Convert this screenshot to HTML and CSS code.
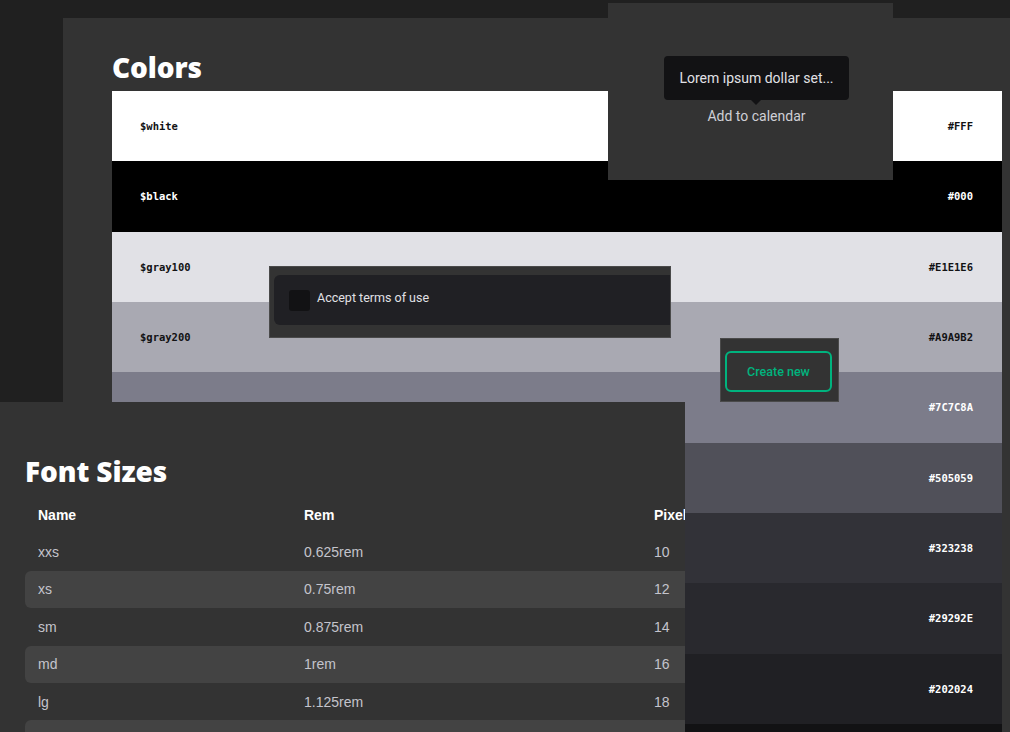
FILE: index.html
```html
<!DOCTYPE html>
<html>
<head>
<meta charset="utf-8">
<link rel="stylesheet" href="styles.css">
</head>
<body>
<div class="desk">
  <section class="win colors-win">
    <h1 class="title">Colors</h1>
    <div class="swatches">
      <div class="sw sw-white"><span>$white</span><span>#FFF</span></div>
      <div class="sw sw-black"><span>$black</span><span>#000</span></div>
      <div class="sw sw-g100"><span>$gray100</span><span>#E1E1E6</span></div>
      <div class="sw sw-g200"><span>$gray200</span><span>#A9A9B2</span></div>
      <div class="sw sw-g300"><span>$gray300</span><span>#7C7C8A</span></div>
      <div class="sw sw-g400"><span>$gray400</span><span>#505059</span></div>
      <div class="sw sw-g500"><span>$gray500</span><span>#323238</span></div>
      <div class="sw sw-g600"><span>$gray600</span><span>#29292E</span></div>
      <div class="sw sw-g700"><span>$gray700</span><span>#202024</span></div>
      <div class="sw sw-g800"><span>$gray800</span><span>#121214</span></div>
    </div>
  </section>

  <section class="win tip-win">
    <div class="tooltip">Lorem ipsum dollar set...</div>
    <div class="tip-trigger">Add to calendar</div>
  </section>

  <section class="win check-win">
    <div class="check-box">
      <span class="checkbox"></span>
      <span class="check-label">Accept terms of use</span>
    </div>
  </section>

  <section class="win btn-win">
    <button class="btn-outline">Create new</button>
  </section>

  <section class="win fonts-win">
    <h1 class="title">Font Sizes</h1>
    <div class="ftable">
      <div class="frow fhead"><span>Name</span><span>Rem</span><span>Pixels</span></div>
      <div class="frow"><span>xxs</span><span>0.625rem</span><span>10</span></div>
      <div class="frow odd"><span>xs</span><span>0.75rem</span><span>12</span></div>
      <div class="frow"><span>sm</span><span>0.875rem</span><span>14</span></div>
      <div class="frow odd"><span>md</span><span>1rem</span><span>16</span></div>
      <div class="frow"><span>lg</span><span>1.125rem</span><span>18</span></div>
      <div class="frow odd"><span>xl</span><span>1.25rem</span><span>20</span></div>
    </div>
  </section>
</div>
</body>
</html>
```
FILE: styles.css
```css
* { box-sizing: border-box; }
html, body { margin: 0; padding: 0; }
body {
  background: #202020;
  width: 1010px;
  height: 732px;
  overflow: hidden;
  font-family: Roboto, "Liberation Sans", sans-serif;
}
.desk { position: relative; width: 1010px; height: 732px; overflow: hidden; }
.win { position: absolute; background: #333333; overflow: hidden; }

.title {
  margin: 0;
  color: #ffffff;
  font-family: "Open Sans", "Liberation Sans", sans-serif;
  font-weight: 800;
  font-size: 28px;
  line-height: 38px;
  letter-spacing: -0.1px;
}

/* Colors */
.colors-win { left: 63px; top: 18px; width: 980px; height: 760px; padding: 30px 0 0 49px; }
.colors-win .title { margin-bottom: 5px; }
.swatches { width: 890px; display: flex; flex-direction: column; }
.sw {
  height: 70.33px;
  display: flex;
  align-items: center;
  justify-content: space-between;
  padding: 0 29px 0 28px;
  font-family: "DejaVu Sans Mono", "Liberation Mono", monospace;
  font-weight: bold;
  font-size: 10.5px;
  color: #ffffff;
}
.sw-white { background: #ffffff; color: #121214; }
.sw-black { background: #000000; }
.sw-g100 { background: #E1E1E6; color: #121214; }
.sw-g200 { background: #A9A9B2; color: #121214; }
.sw-g300 { background: #7C7C8A; }
.sw-g400 { background: #505059; }
.sw-g500 { background: #323238; }
.sw-g600 { background: #29292E; }
.sw-g700 { background: #202024; }
.sw-g800 { background: #121214; }

/* Tooltip */
.tip-win {
  left: 608px; top: 3px; width: 285px; height: 177px;
  display: flex; flex-direction: column; align-items: center;
  padding: 53px 0 0 12px;
}
.tooltip {
  position: relative;
  background: #121214;
  color: #e1e1e6;
  font-size: 14px;
  line-height: 20px;
  padding: 12px 15px 12px 15px;
  border-radius: 4px;
  white-space: nowrap;
}
.tooltip::after {
  content: "";
  position: absolute;
  left: 50%;
  bottom: -5px;
  margin-left: -5px;
  border-left: 5px solid transparent;
  border-right: 5px solid transparent;
  border-top: 5px solid #121214;
}
.tip-trigger {
  margin-top: 6px;
  color: #cfcfd6;
  font-size: 14px;
  line-height: 20px;
}

/* Checkbox */
.check-win {
  left: 269px; top: 266px; width: 402px; height: 72px;
  border: 1px solid #4a4a4a;
  padding: 8px 0 0 4px;
}
.check-box {
  width: 420px; height: 50px;
  background: #202024;
  border-radius: 6px;
  display: flex; align-items: center;
  padding-left: 15px;
  gap: 7px;
}
.checkbox {
  width: 21px; height: 21px;
  background: #121214;
  border-radius: 3px;
  flex: none;
}
.check-label { color: #e1e1e6; font-size: 12.5px; line-height: 16px; margin-bottom: 4px; }

/* Button */
.btn-win {
  left: 720px; top: 338px; width: 119px; height: 64px;
  border: 1px solid #4a4a4a;
  padding: 12px 0 0 4px;
}
.btn-outline {
  width: 107px; height: 41px;
  background: transparent;
  border: 2px solid #00B37E;
  border-radius: 6px;
  color: #00B37E;
  font-family: Roboto, "Liberation Sans", sans-serif;
  font-weight: 500;
  font-size: 12.5px;
  padding: 0;
}

/* Font sizes */
.fonts-win { left: 0; top: 402px; width: 685px; height: 340px; padding: 50px 0 0 25px; }
.fonts-win .title { margin-bottom: 6px; }
.ftable { width: 760px; display: flex; flex-direction: column; }
.frow {
  display: grid;
  grid-template-columns: 266px 350px 1fr;
  align-items: center;
  height: 37.4px;
  padding-left: 13px;
  border-radius: 6px;
  font-family: "Liberation Sans", Arial, sans-serif;
  font-size: 14px;
  color: #c4c4cc;
}
.frow.odd { background: #434343; }
.fhead { color: #ffffff; font-weight: bold; }
```
